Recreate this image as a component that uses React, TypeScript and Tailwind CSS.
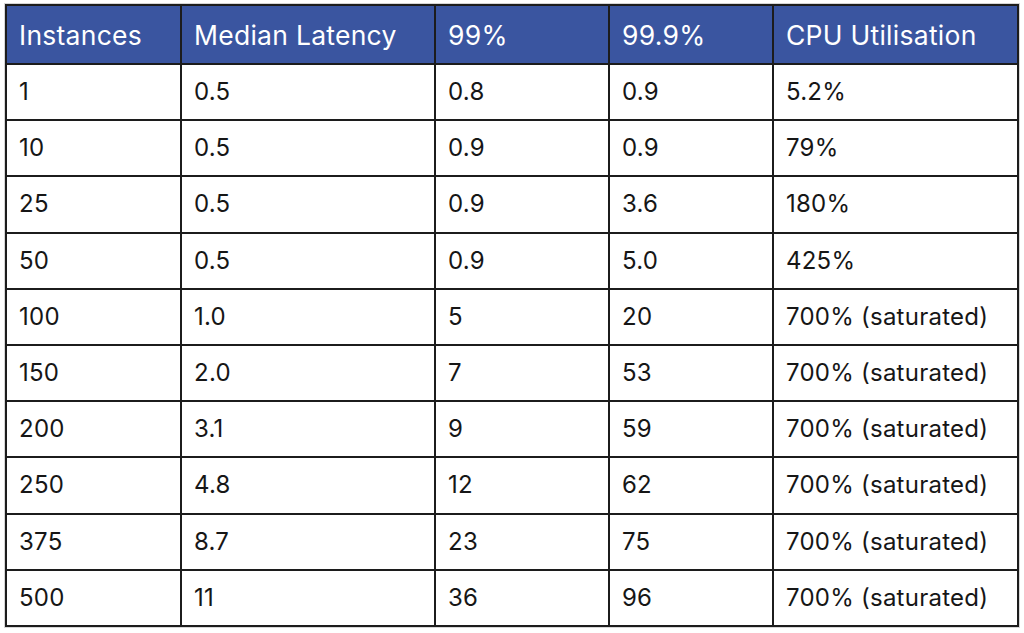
const rows: string[][] = [
  ['1', '0.5', '0.8', '0.9', '5.2%'],
  ['10', '0.5', '0.9', '0.9', '79%'],
  ['25', '0.5', '0.9', '3.6', '180%'],
  ['50', '0.5', '0.9', '5.0', '425%'],
  ['100', '1.0', '5', '20', '700% (saturated)'],
  ['150', '2.0', '7', '53', '700% (saturated)'],
  ['200', '3.1', '9', '59', '700% (saturated)'],
  ['250', '4.8', '12', '62', '700% (saturated)'],
  ['375', '8.7', '23', '75', '700% (saturated)'],
  ['500', '11', '36', '96', '700% (saturated)'],
];

const headers = ['Instances', 'Median Latency', '99%', '99.9%', 'CPU Utilisation'];
const widths = ['w-[175px]', 'w-[254px]', 'w-[174px]', 'w-[164px]', 'w-[245px]'];

export default function App() {
  return (
    <div className="min-h-[633px] w-[1024px] bg-white pt-[4px] pl-[5px] font-['Inter',sans-serif]">
      <table className="w-[1012px] table-fixed border-collapse border-2 border-[#1c1c1c] shadow-[0_0_0_1px_#d6d6d6]">
        <colgroup>
          {widths.map((w, i) => (
            <col key={i} className={w} />
          ))}
        </colgroup>
        <thead>
          <tr className="h-[59px] bg-[#3a55a0]">
            {headers.map(h => (
              <th
                key={h}
                className="border-2 border-[#1c1c1c] px-[12px] pt-[1px] text-left text-[26.5px] leading-none font-normal tracking-[0.01em] text-white"
              >
                {h}
              </th>
            ))}
          </tr>
        </thead>
        <tbody>
          {rows.map((r, ri) => (
            <tr key={ri} className="h-[56.2px]">
              {r.map((c, ci) => (
                <td
                  key={ci}
                  className="border-2 border-[#1c1c1c] px-[12px] text-left text-[24px] leading-none tracking-[0.01em] text-[#161616]"
                >
                  {c}
                </td>
              ))}
            </tr>
          ))}
        </tbody>
      </table>
    </div>
  );
}
